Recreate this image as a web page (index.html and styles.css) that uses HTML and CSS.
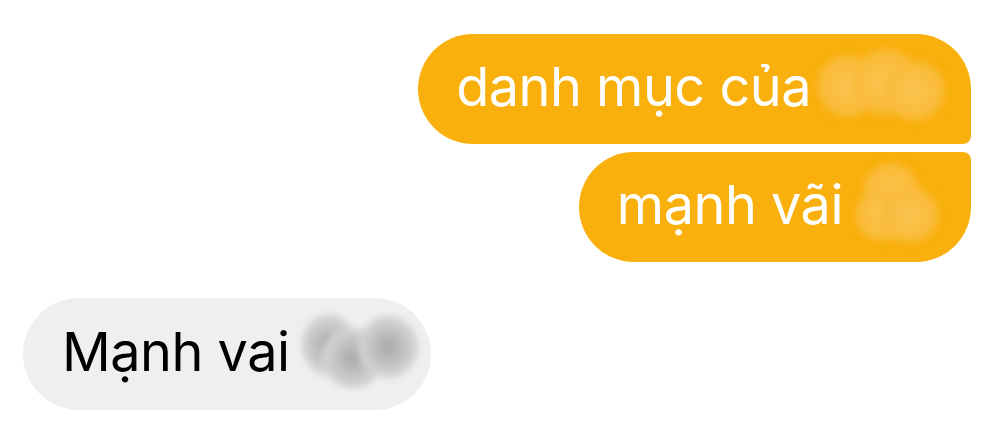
FILE: index.html
```html
<!DOCTYPE html>
<html lang="vi">
<head>
<meta charset="utf-8">
<link rel="stylesheet" href="styles.css">
</head>
<body>
<div class="chat">
  <div class="group out">
    <div class="bubble mine first">danh mục của<span class="blur b1"><i class="c c1"></i><i class="c c2"></i><i class="c c3"></i></span></div>
    <div class="bubble mine last">mạnh vãi<span class="blur b2"><i class="c c1"></i><i class="c c2"></i><i class="c c3"></i></span></div>
  </div>
  <div class="group in">
    <div class="bubble theirs">Mạnh vai<span class="blur b3"><i class="c c1"></i><i class="c c2"></i><i class="c c3"></i></span></div>
  </div>
</div>
</body>
</html>
```
FILE: styles.css
```css
html, body {
  margin: 0;
  padding: 0;
  background: #ffffff;
}
body {
  font-family: Inter, "Noto Sans", "DejaVu Sans", sans-serif;
  width: 994px;
  height: 440px;
  overflow: hidden;
}
.chat {
  display: flex;
  flex-direction: column;
  gap: 36px;
  padding: 34px 23px 0 23px;
}
.group {
  display: flex;
  flex-direction: column;
  gap: 8px;
}
.group.out { align-items: flex-end; }
.group.in { align-items: flex-start; }
.bubble {
  display: flex;
  align-items: center;
  height: 110px;
  box-sizing: border-box;
  font-size: 54px;
  letter-spacing: -0.5px;
  white-space: nowrap;
  padding-bottom: 6px;
}
.mine {
  background: #f9b00c;
  color: #ffffff;
}
.mine.first {
  border-radius: 55px 55px 8px 55px;
  padding-left: 38px;
  padding-right: 26px;
}
.mine.last {
  border-radius: 55px 8px 55px 55px;
  padding-left: 38px;
  padding-right: 30px;
}
.theirs {
  background: #efefef;
  color: #000000;
  border-radius: 56px;
  height: 112px;
  padding-left: 39px;
  padding-right: 14px;
}
.blur {
  position: relative;
  display: inline-block;
  height: 80px;
  filter: blur(3px);
  margin-top: 6px;
}
.b1 { width: 128px; margin-left: 6px; }
.b2 { width: 80px; margin-left: 18px; }
.b3 { width: 115px; margin-left: 12px; }
.c {
  position: absolute;
  border-radius: 50%;
}
.mine .c {
  background: radial-gradient(circle at 50% 50%, #fac456 0%, #f9bb3a 60%, #f9b52a 100%);
  opacity: 0.95;
}
.theirs .c {
  background: radial-gradient(circle at 50% 50%, #a8a8a8 0%, #cdcdcd 55%, #e6e6e6 100%);
}
.b1 .c1 { left: 0px; top: 6px; width: 62px; height: 62px; }
.b1 .c2 { left: 36px; top: 0px; width: 66px; height: 66px; }
.b1 .c3 { left: 68px; top: 12px; width: 60px; height: 60px; }
.b2 .c1 { left: 2px; top: -4px; width: 56px; height: 58px; }
.b2 .c2 { left: -6px; top: 22px; width: 56px; height: 52px; }
.b2 .c3 { left: 20px; top: 20px; width: 58px; height: 56px; }
.b3 .c1 { left: 0px; top: 0px; width: 54px; height: 62px; }
.b3 .c2 { left: 20px; top: 14px; width: 62px; height: 60px; }
.b3 .c3 { left: 56px; top: 2px; width: 60px; height: 62px; }
```
